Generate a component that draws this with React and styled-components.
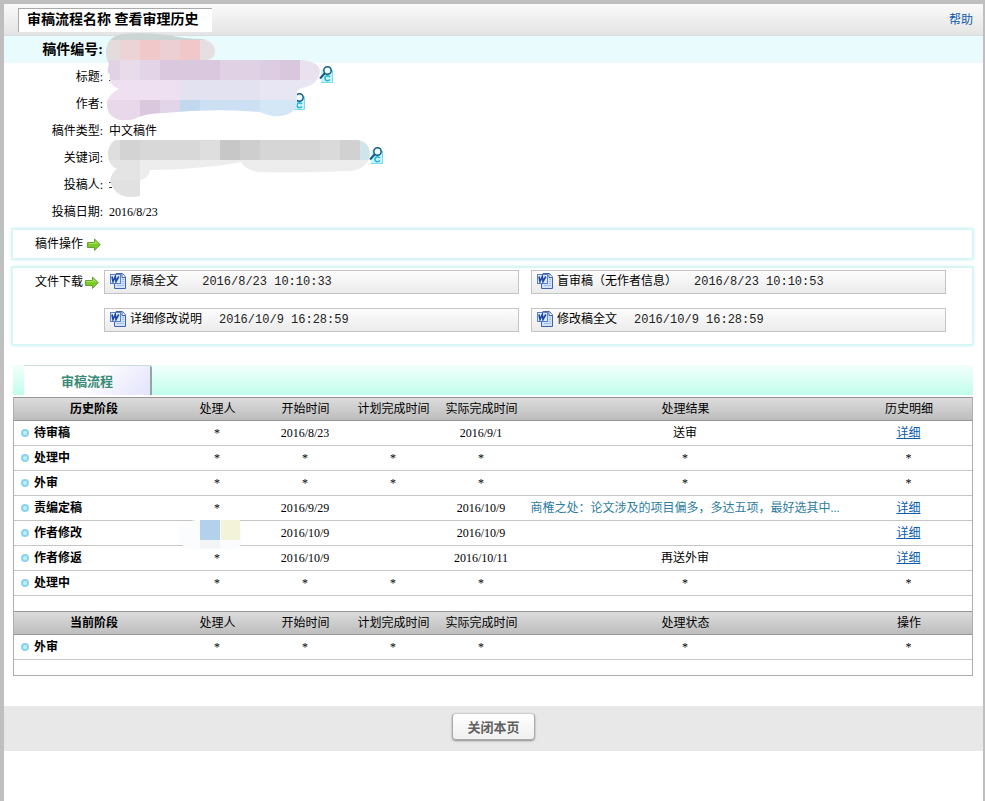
import React from "react";
import styled, { createGlobalStyle } from "styled-components";

const GlobalStyle = createGlobalStyle`
  * {
    box-sizing: border-box;
  }

  body {
    margin: 0;
    background: #fff;
    color: #000;
    font-family: "Liberation Serif", "Noto Sans CJK SC", serif;
    font-size: 12px;
    line-height: 18px;
  }
`;

const Page = styled.div`
  min-height: 100vh;
  border: solid #bfbfbf;
  border-width: 4px 2px 0 4px;
`;

const TopBar = styled.header`
  display: flex;
  justify-content: space-between;
  align-items: flex-start;
  height: 32px;
  padding: 4px 10px 0 14px;
  border-bottom: 1px solid #d9dcdc;
  background: linear-gradient(#fafafa, #e4e4e4);
`;

const PageTitle = styled.h1`
  margin: 0;
  height: 24px;
  padding: 0 13px 0 8px;
  border: solid #a9a9a9;
  border-width: 1px 0 0 1px;
  background: #fff;
  font-size: 14px;
  font-weight: bold;
  line-height: 22px;
`;

const HelpLink = styled.a`
  margin-top: 3px;
  color: #0a5cad;
  text-decoration: none;
`;

const Details = styled.dl`
  position: relative;
  margin: 0 0 3px;
`;

const DetailRow = styled.div`
  display: flex;
  align-items: center;
  gap: 6px;
  height: 27px;
  background: ${(props) => (props.$main ? "#e9fbfd" : "#fff")};
  font-size: ${(props) => (props.$main ? "14px" : "12px")};
  font-weight: ${(props) => (props.$main ? "bold" : "normal")};
`;

const DetailLabel = styled.dt`
  width: 99px;
  text-align: right;
`;

const DetailValue = styled.dd`
  display: flex;
  align-items: center;
  margin: 0;
  padding-left: ${(props) => props.$hidden || 0}px;
`;

const LookupButton = styled.button`
  display: block;
  width: 16px;
  height: 22px;
  padding: 0 0 4px;
  border: 0;
  background: none;
  cursor: pointer;

  svg {
    display: block;
  }
`;

const Mosaic = styled.svg`
  position: absolute;
  top: -4px;
  left: 96px;
  pointer-events: none;
`;

const Panel = styled.section`
  display: flex;
  margin: 0 9px 6px 7px;
  padding: 1px 26px 1px 22px;
  border: 2px solid #d8f6f6;
  border-radius: 2px;
  box-shadow: 0 0 3px #d5f0fa;
`;

const PanelLabel = styled.h2`
  display: flex;
  align-items: center;
  gap: ${(props) => props.$gap}px;
  flex: none;
  width: 69px;
  height: 26px;
  margin: 0;
  font-size: 12px;
  font-weight: normal;
`;

const FileGrid = styled.div`
  flex: 1;
  display: grid;
  grid-template-columns: 1fr 1fr;
  gap: 14px 12px;
  padding: 1px 0 11px;
`;

const FileLink = styled.a`
  display: flex;
  align-items: center;
  height: 24px;
  padding-left: 5px;
  border: 1px solid #c4c4c4;
  background: linear-gradient(#fdfdfd, #ebebeb);
  color: #000;
  font-family: "Liberation Mono", "Noto Sans CJK SC", monospace;
  text-decoration: none;

  svg {
    margin: 0 4px 2px 0;
  }
`;

const FileDate = styled.span`
  margin-left: 17px;
  color: #222;
`;

const Flow = styled.section`
  margin: 19px 10px 30px 9px;
`;

const TabBar = styled.div`
  display: flex;
  height: 32px;
  padding: 1px 0 0 11px;
  border-bottom: 2px solid #fff;
  background: linear-gradient(#f3fffc, #c1fdec);
`;

const Tab = styled.button`
  width: 128px;
  padding: 0;
  border: solid #8fa8a4;
  border-width: 0 2px 0 0;
  border-radius: 0 2px 0 0;
  background: linear-gradient(135deg, #fff 50%, #e2e2fc);
  box-shadow: 0 -1px 0 #c9dcd8;
  color: #3a8b74;
  font-family: inherit;
  font-size: 13px;
  font-weight: bold;
`;

const FlowTable = styled.table`
  width: 100%;
  table-layout: fixed;
  border-collapse: separate;
  border-spacing: 0;
  border: solid #adadad;
  border-width: 0 1px 1px;
  text-align: center;
`;

const HeadCell = styled.th`
  height: 24px;
  padding: 0 0 0 1px;
  border: solid #979797;
  border-width: 1px 0;
  background: linear-gradient(#dcdcdc, #bdbdbd);
  font-weight: ${(props) => (props.$strong ? "bold" : "normal")};
`;

const StageCell = styled.th`
  height: 25px;
  padding: 0 0 0 7px;
  border-bottom: 1px solid #c6c6c6;
  text-align: left;
`;

const Stage = styled.span`
  display: flex;
  align-items: center;
  gap: 5px;
`;

const Bullet = styled.span`
  width: 8px;
  height: 8px;
  border: 2px solid #8ad2ee;
  border-radius: 50%;
  background: #b9f2fb;
`;

const Cell = styled.td`
  position: relative;
  height: 25px;
  padding: 0;
  border-bottom: 1px solid #c6c6c6;
  white-space: nowrap;
`;

const SpacerCell = styled.td`
  height: 15px;
  padding: 0;
`;

const NameMosaic = styled.svg`
  position: absolute;
  top: -4px;
  left: 4px;
`;

const Comment = styled.span`
  color: #2c7c9f;
`;

const DetailLink = styled.a`
  color: #0a5cad;
  text-decoration: underline;
`;

const Footer = styled.footer`
  display: flex;
  justify-content: center;
  align-items: flex-start;
  height: 45px;
  padding-top: 7px;
  background: #e8e8e8;
`;

const CloseButton = styled.button`
  width: 83px;
  height: 27px;
  padding: 0;
  border: 1px solid #aaa;
  border-top-color: #ccc;
  border-radius: 4px;
  background: linear-gradient(#fff, #f0f0f0);
  box-shadow: 0 1px 2px rgba(0, 0, 0, 0.4);
  color: #606060;
  font-family: inherit;
  font-size: 13px;
  font-weight: bold;
  cursor: pointer;
`;

const files = [
  { name: "原稿全文\u00a0", date: "2016/8/23 10:10:33" },
  { name: "盲审稿（无作者信息）", date: "2016/8/23 10:10:53" },
  { name: "详细修改说明", date: "2016/10/9 16:28:59" },
  { name: "修改稿全文", date: "2016/10/9 16:28:59" },
];

const columnWidths = ["159px", "88px", "88px", "88px", "88px", "auto", "127px"];

const historyHead = ["历史阶段", "处理人", "开始时间", "计划完成时间", "实际完成时间", "处理结果", "历史明细"];
const currentHead = ["当前阶段", "处理人", "开始时间", "计划完成时间", "实际完成时间", "处理状态", "操作"];

const historyRows = [
  { stage: "待审稿", person: "*", start: "2016/8/23", plan: "", end: "2016/9/1", result: "送审", detail: true },
  { stage: "处理中", person: "*", start: "*", plan: "*", end: "*", result: "*" },
  { stage: "外审", person: "*", start: "*", plan: "*", end: "*", result: "*" },
  {
    stage: "责编定稿",
    person: "*",
    start: "2016/9/29",
    plan: "",
    end: "2016/10/9",
    result: <Comment>商榷之处：论文涉及的项目偏多，多达五项，最好选其中...</Comment>,
    detail: true,
  },
  { stage: "作者修改", person: <HiddenName />, start: "2016/10/9", plan: "", end: "2016/10/9", result: "", detail: true },
  { stage: "作者修返", person: "*", start: "2016/10/9", plan: "", end: "2016/10/11", result: "再送外审", detail: true },
  { stage: "处理中", person: "*", start: "*", plan: "*", end: "*", result: "*" },
];

const currentRows = [{ stage: "外审", person: "*", start: "*", plan: "*", end: "*", result: "*" }];

// [x, y, width, colour], every tile is 20px high
const tiles = [
  [100, 20, 120, "#cbd5d3"],
  [100, 40, 20, "#e3dcdf"],
  [120, 40, 20, "#ecd3d5"],
  [140, 40, 20, "#f1c8ca"],
  [160, 40, 20, "#ebcfd2"],
  [180, 40, 20, "#f1c7ca"],
  [200, 40, 20, "#e5dfe1"],
  [100, 60, 20, "#e1d2e5"],
  [120, 60, 20, "#e8dcea"],
  [140, 60, 20, "#e4d4e7"],
  [160, 60, 60, "#dac8de"],
  [220, 60, 40, "#e0d1e5"],
  [260, 60, 20, "#dccde2"],
  [280, 60, 20, "#d9c8dd"],
  [300, 60, 20, "#e9e2ee"],
  [100, 80, 80, "#eee0f0"],
  [180, 80, 80, "#e3e2f1"],
  [260, 80, 60, "#e7e6f2"],
  [100, 100, 40, "#e8d8e9"],
  [140, 100, 20, "#dac8df"],
  [160, 100, 20, "#e2d5e9"],
  [180, 100, 20, "#c1d8ee"],
  [200, 100, 60, "#cddff3"],
  [260, 100, 40, "#d4e7f6"],
  [100, 140, 20, "#dedede"],
  [120, 140, 20, "#d3d3d3"],
  [140, 140, 60, "#d8d8d8"],
  [200, 140, 20, "#dedede"],
  [220, 140, 20, "#c7c7c7"],
  [240, 140, 20, "#cecece"],
  [260, 140, 60, "#d6d6d6"],
  [320, 140, 20, "#dadada"],
  [340, 140, 20, "#d1d1d1"],
  [360, 140, 20, "#cfe5eb"],
  [100, 160, 40, "#e4e4e4"],
  [140, 160, 240, "#ededed"],
  [100, 180, 40, "#e1e1e1"],
];

function DetailsMosaic() {
  return (
    <Mosaic width="280" height="170" viewBox="100 32 280 170" aria-hidden="true">
      <clipPath id="smudges">
        <path d="M107 46Q110 36 122 34Q144 32 168 35Q184 39 202 39Q216 42 215 53Q214 59 206 60H300Q320 61 320 72Q318 84 306 87Q298 88 297 92V104Q295 114 280 116Q270 117 260 112Q210 108 165 113Q145 113 134 119Q122 123 113 117Q106 112 107 101Q110 93 119 89Q108 85 110 75Q106 72 109 64Q104 56 107 46Z" />
        <path d="M108 151Q111 138 124 138H160V140H358Q370 142 370 155Q368 169 350 171Q300 173 258 172Q244 169 241 162Q205 169 150 170Q149 178 140 180V196Q116 201 110 181Q111 173 117 169Q107 165 108 151Z" />
      </clipPath>
      <path d="M109 80h2v1h-2zM109 182h2v1h-2zM109 187h3v1h-3z" fill="#333" />
      <g clipPath="url(#smudges)" shapeRendering="crispEdges">
        {tiles.map(([x, y, width, fill]) => (
          <rect key={`${x}-${y}`} x={x} y={y} width={width} height="20" fill={fill} />
        ))}
      </g>
    </Mosaic>
  );
}

function HiddenName() {
  return (
    <NameMosaic width="68" height="32" viewBox="177 517 68 32" aria-hidden="true">
      <path d="M178 535Q179 522 196 520H238Q244 530 241 545Q228 553 200 551Q180 551 178 535Z" fill="#fafcfe" />
      <path d="M200 520h20v20h-20z" fill="#b4d1ec" />
      <path d="M221 520h19v20h-19z" fill="#f3f3da" />
      <path d="M200 540h20v9h-20z" fill="#f3f5f6" />
    </NameMosaic>
  );
}

function Lookup({ label }) {
  return (
    <LookupButton type="button" aria-label={label}>
      <svg width="16" height="18" viewBox="0 0 16 18" fill="none">
        <rect x="2" y="3" width="12" height="14" rx="1" fill="#c9f4fb" />
        <path d="M13.5 4V16.5H2" stroke="#79d9ee" />
        <circle cx="8.5" cy="4.5" r="3.7" fill="#eefcff" stroke="#125a86" strokeWidth="1.5" />
        <path d="M6 7L1 12.5" stroke="#125a86" strokeWidth="2" />
        <path d="M11 11Q10 9.7 8.5 9.7Q6 9.8 6 12.3Q6 14.7 8.5 14.8Q10 14.8 11 13.6" stroke="#22b6d8" strokeWidth="1.5" />
      </svg>
    </LookupButton>
  );
}

function ArrowIcon() {
  return (
    <svg width="14" height="13" viewBox="0 0 14 13">
      <path
        d="M.5 4.5H7.5V1L13.3 6.7L7.5 12.4V9.5H.5Z"
        fill="#7ccb25"
        stroke="#6a9f3e"
        strokeLinejoin="round"
      />
      <path d="M1.5 5.5H8.5V3.5L11 6" fill="none" stroke="#a6e45c" />
    </svg>
  );
}

function WordIcon() {
  return (
    <svg width="16" height="17" viewBox="0 0 16 17">
      <path d="M4.5 2.5V15.5H15.5V4L12.5 .5H6Z" fill="#d3e2fb" stroke="#4263a8" />
      <path d="M12 1V4.5H15.5" fill="#fff" stroke="#4263a8" />
      <path d="M7 12.5H14M12 6.5H14M12 8.5H14M12 10.5H14" stroke="#a3bdec" />
      <rect x=".5" y="1.5" width="10" height="9" fill="#dce9ff" stroke="#5c82cc" />
      <path d="M2 3.5L3 8.5L5.3 3.5L6 8.5L8.8 3.5" fill="none" stroke="#1c47a3" strokeWidth="1.6" />
    </svg>
  );
}

function HeadRow({ titles }) {
  return (
    <tr>
      {titles.map((title, index) => (
        <HeadCell key={title} scope="col" $strong={index === 0}>
          {title}
        </HeadCell>
      ))}
    </tr>
  );
}

function StageRow({ row }) {
  return (
    <tr>
      <StageCell scope="row">
        <Stage>
          <Bullet />
          {row.stage}
        </Stage>
      </StageCell>
      <Cell>{row.person}</Cell>
      <Cell>{row.start}</Cell>
      <Cell>{row.plan}</Cell>
      <Cell>{row.end}</Cell>
      <Cell>{row.result}</Cell>
      <Cell>{row.detail ? <DetailLink href="#detail">详细</DetailLink> : "*"}</Cell>
    </tr>
  );
}

function Spacer() {
  return (
    <tr>
      <SpacerCell colSpan={7} />
    </tr>
  );
}

export default function App() {
  return (
    <>
      <GlobalStyle />
      <Page>
        <TopBar>
          <PageTitle>审稿流程名称 查看审理历史</PageTitle>
          <HelpLink href="#help">帮助</HelpLink>
        </TopBar>

        <Details>
          <DetailRow $main>
            <DetailLabel>稿件编号:</DetailLabel>
            <DetailValue />
          </DetailRow>
          <DetailRow>
            <DetailLabel>标题:</DetailLabel>
            <DetailValue $hidden={210}>
              <Lookup label="检索标题" />
            </DetailValue>
          </DetailRow>
          <DetailRow>
            <DetailLabel>作者:</DetailLabel>
            <DetailValue $hidden={182}>
              <Lookup label="检索作者" />
            </DetailValue>
          </DetailRow>
          <DetailRow>
            <DetailLabel>稿件类型:</DetailLabel>
            <DetailValue>中文稿件</DetailValue>
          </DetailRow>
          <DetailRow>
            <DetailLabel>关键词:</DetailLabel>
            <DetailValue $hidden={260}>
              <Lookup label="检索关键词" />
            </DetailValue>
          </DetailRow>
          <DetailRow>
            <DetailLabel>投稿人:</DetailLabel>
            <DetailValue />
          </DetailRow>
          <DetailRow>
            <DetailLabel>投稿日期:</DetailLabel>
            <DetailValue>2016/8/23</DetailValue>
          </DetailRow>
          <DetailsMosaic />
        </Details>

        <Panel>
          <PanelLabel $gap={4}>
            稿件操作
            <ArrowIcon />
          </PanelLabel>
        </Panel>

        <Panel>
          <PanelLabel $gap={2}>
            文件下载
            <ArrowIcon />
          </PanelLabel>
          <FileGrid>
            {files.map((file) => (
              <FileLink key={file.name} href="#file">
                <WordIcon />
                {file.name}
                <FileDate>{file.date}</FileDate>
              </FileLink>
            ))}
          </FileGrid>
        </Panel>

        <Flow>
          <TabBar role="tablist">
            <Tab type="button" role="tab" aria-selected="true">
              审稿流程
            </Tab>
          </TabBar>
          <FlowTable>
            <colgroup>
              {columnWidths.map((width, index) => (
                <col key={index} style={{ width }} />
              ))}
            </colgroup>
            <tbody>
              <HeadRow titles={historyHead} />
              {historyRows.map((row, index) => (
                <StageRow key={index} row={row} />
              ))}
              <Spacer />
              <HeadRow titles={currentHead} />
              {currentRows.map((row, index) => (
                <StageRow key={index} row={row} />
              ))}
              <Spacer />
            </tbody>
          </FlowTable>
        </Flow>

        <Footer>
          <CloseButton type="button">关闭本页</CloseButton>
        </Footer>
      </Page>
    </>
  );
}
